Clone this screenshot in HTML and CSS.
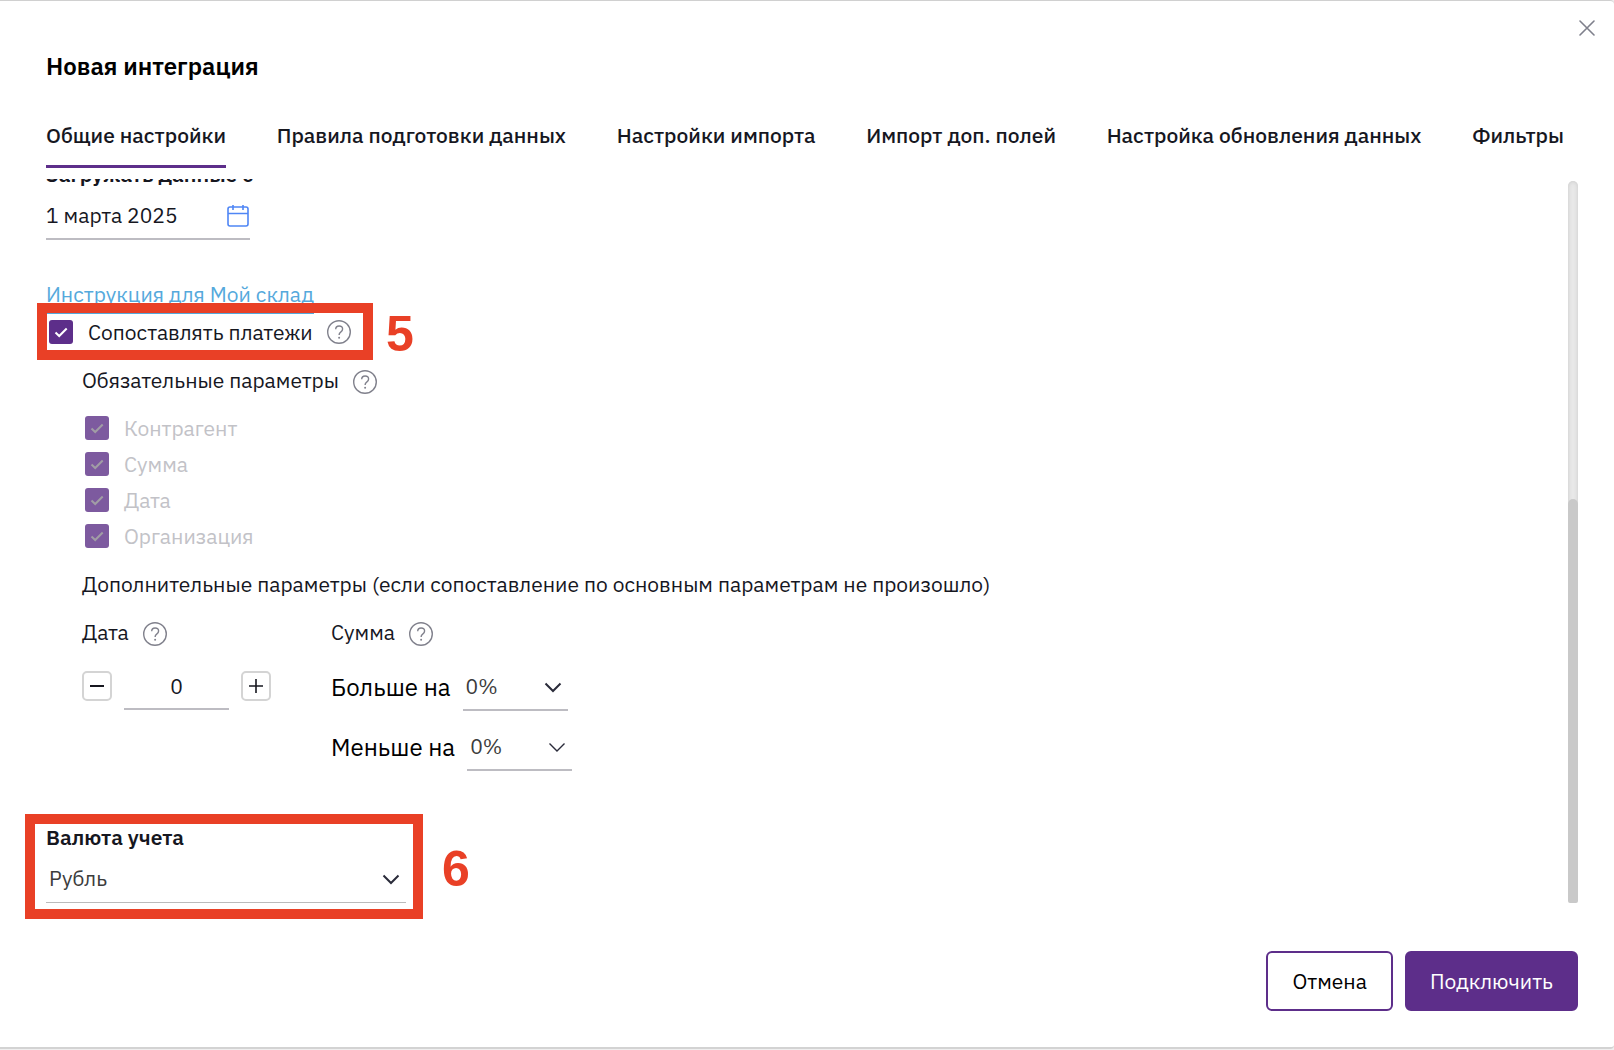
FILE: index.html
```
<!DOCTYPE html>
<html lang="ru">
<head>
  <meta charset="UTF-8">
  <meta name="viewport" content="width=device-width, initial-scale=1.0">
  <title>Новая интеграция</title>
  <link rel="stylesheet" href="styles.css">
</head>
<body>

  <!-- shared icons -->
  <svg class="sprite" aria-hidden="true">
    <symbol id="help" viewBox="0 0 24 24">
      <circle cx="12" cy="12" r="11.3"/>
      <path d="M8.7 9.2C8.7 7.2 10.1 6 12.1 6s3.5 1.3 3.5 3.1c0 1.5-.8 2.3-1.9 3-1.2.8-1.6 1.5-1.6 2.9"/>
      <circle class="dot" cx="12.1" cy="17.8" r="1"/>
    </symbol>
    <symbol id="check" viewBox="0 0 24 24">
      <path d="M6.5 12.5l3.7 3.5 7.5-7.5"/>
    </symbol>
    <symbol id="chevron" viewBox="0 0 18 12">
      <path d="M1.500 2.500l7.500 7.500 7.500-7.500"/>
    </symbol>
  </svg>

  <div class="dialog" role="dialog" aria-labelledby="title">
    <button class="close" type="button" aria-label="Закрыть">
      <svg viewBox="0 0 16 16"><path d="M1 1l14 14M15 1L1 15"/></svg>
    </button>

    <h1 class="title" id="title">Новая интеграция</h1>

    <nav class="tabs">
      <a class="tab active" href="#general">Общие настройки</a>
      <a class="tab" href="#rules">Правила подготовки данных</a>
      <a class="tab" href="#import">Настройки импорта</a>
      <a class="tab" href="#fields">Импорт доп. полей</a>
      <a class="tab" href="#update">Настройка обновления данных</a>
      <a class="tab" href="#filters">Фильтры</a>
    </nav>

    <div class="body">
      <form class="content" id="integration">
        <label class="label" for="date">Загружать данные с</label>
        <div class="date">
          <input type="text" id="date" value="1 марта 2025">
          <svg class="calendar" viewBox="0 0 22 24">
            <rect x="1" y="3" width="20" height="19" rx="2"/>
            <path d="M1 9.5h20M6 1v5M16 1v5"/>
          </svg>
        </div>

        <a class="link" href="#manual">Инструкция для Мой склад</a>

        <div class="row">
          <span class="check">
            <input type="checkbox" id="match" checked>
            <svg><use href="#check"/></svg>
          </span>
          <label for="match">Сопоставлять платежи</label>
          <svg class="help"><use href="#help"/></svg>
        </div>

        <div class="group">
          <div class="row">
            <span>Обязательные параметры</span>
            <svg class="help"><use href="#help"/></svg>
          </div>

          <div class="checks">
            <div class="row disabled">
              <span class="check"><input type="checkbox" id="agent" checked disabled><svg><use href="#check"/></svg></span>
              <label for="agent">Контрагент</label>
            </div>
            <div class="row disabled">
              <span class="check"><input type="checkbox" id="sum" checked disabled><svg><use href="#check"/></svg></span>
              <label for="sum">Сумма</label>
            </div>
            <div class="row disabled">
              <span class="check"><input type="checkbox" id="day" checked disabled><svg><use href="#check"/></svg></span>
              <label for="day">Дата</label>
            </div>
            <div class="row disabled">
              <span class="check"><input type="checkbox" id="org" checked disabled><svg><use href="#check"/></svg></span>
              <label for="org">Организация</label>
            </div>
          </div>

          <p class="note">Дополнительные параметры (если сопоставление по основным параметрам не произошло)</p>

          <div class="extra">
            <div class="column">
              <div class="row">
                <label for="days">Дата</label>
                <svg class="help"><use href="#help"/></svg>
              </div>
              <div class="stepper">
                <button type="button" aria-label="Меньше"><svg viewBox="0 0 16 16"><path class="bold" d="M1 8h14"/></svg></button>
                <input type="text" id="days" value="0">
                <button type="button" aria-label="Больше"><svg viewBox="0 0 16 16"><path d="M1 8h14M8 1v14"/></svg></button>
              </div>
            </div>

            <div class="column">
              <div class="row">
                <span>Сумма</span>
                <svg class="help"><use href="#help"/></svg>
              </div>
              <div class="percents">
                <div class="percent">
                  <label for="more">Больше на</label>
                  <span class="select">
                    <select id="more"><option>0%</option></select>
                    <svg><use href="#chevron"/></svg>
                  </span>
                </div>
                <div class="percent">
                  <label for="less">Меньше на</label>
                  <span class="select thin">
                    <select id="less"><option>0%</option></select>
                    <svg><use href="#chevron"/></svg>
                  </span>
                </div>
              </div>
            </div>
          </div>
        </div>

        <label class="label currency-label" for="currency">Валюта учета</label>
        <span class="select currency">
          <select id="currency"><option>Рубль</option></select>
          <svg><use href="#chevron"/></svg>
        </span>
      </form>

      <div class="scrollbar"><div class="thumb"></div></div>
    </div>

    <footer class="footer">
      <button class="btn" type="button">Отмена</button>
      <button class="btn primary" type="submit" form="integration">Подключить</button>
    </footer>

    <!-- step marks over the form -->
    <div class="mark mark-5"></div>
    <div class="number number-5">5</div>
    <div class="mark mark-6"></div>
    <div class="number number-6">6</div>
  </div>

</body>
</html>
```
FILE: styles.css
```
* {
  box-sizing: border-box;
}

body {
  margin: 0;
  background: #efefef;
  font-family: "IBM Plex Sans", Roboto, sans-serif;
  font-size: 21px;
  line-height: 28px;
  color: #16171f;
}

input, select, button {
  font: inherit;
  color: inherit;
  margin: 0;
  padding: 0;
  border: 0;
  border-radius: 0;
  background: none;
  appearance: none;
}

svg {
  display: block;
  fill: none;
  stroke: currentColor;
}

.sprite {
  position: absolute;
  width: 0;
  height: 0;
}

.dialog {
  position: relative;
  display: flex;
  flex-direction: column;
  height: calc(100vh - 1px);
  min-height: 900px;
  padding: 49px 36px 36px 46px;
  background: #fff;
  border-top: 1px solid #d0d0d0;
  border-bottom: 2px solid #d3d3d3;
  border-radius: 0 4px 4px 0;
}

.close {
  position: absolute;
  top: 19px;
  right: 19px;
  width: 16px;
  height: 16px;
  color: #7f808c;
}

.close svg {
  width: 16px;
  height: 16px;
  stroke-width: 1.6;
  stroke-linecap: round;
}

.title {
  margin: 0 0 39px;
  font-size: 24px;
  line-height: 32px;
  font-weight: 600;
  color: #000;
}

/* tabs */
.tabs {
  display: flex;
  justify-content: space-between;
  padding-right: 14px;
}

.tab {
  padding-bottom: 16px;
  border-bottom: 3px solid transparent;
  font-weight: 500;
  color: inherit;
  text-decoration: none;
  white-space: nowrap;
}

.tab.active {
  border-color: #5d2e8a;
}

/* scrolled to the end, so the top of the form is cut */
.body {
  flex: 1;
  display: flex;
  justify-content: space-between;
  align-items: flex-end;
  min-height: 0;
  margin: 11px 0 48px;
  overflow: hidden;
}

.content {
  display: flex;
  flex-direction: column;
  align-items: flex-start;
}

.scrollbar {
  display: flex;
  align-items: flex-end;
  width: 10px;
  height: calc(100% - 2px);
  border-radius: 5px;
  background: #e8e8e8;
  box-shadow: inset 0 0 4px #c8c8c8;
}

.thumb {
  width: 100%;
  height: 56%;
  border-radius: 5px 5px 2px 2px;
  background: #c9c9c9;
}

.label {
  font-weight: 600;
}

.date {
  display: flex;
  align-items: center;
  width: 204px;
  height: 46px;
  margin-top: 6px;
  padding-right: 1px;
  border-bottom: 2px solid #bdbcc2;
}

.date input {
  flex: 1;
  min-width: 0;
  padding-bottom: 2px;
}

.calendar {
  width: 22px;
  height: 24px;
  color: #4f86f5;
  stroke-width: 1.6;
}

.link {
  margin: 40px 0 4px;
  padding-bottom: 5px;
  border-bottom: 1px solid #55a9dc;
  color: #55a9dc;
  text-decoration: none;
}

.row {
  display: flex;
  align-items: center;
  height: 28px;
}

.help {
  width: 24px;
  height: 24px;
  margin-left: 14px;
  color: #80818c;
  stroke-width: 1.4;
}

.group .help {
  margin-top: 3px;
}

.dot {
  fill: currentColor;
  stroke: none;
}

.check {
  display: grid;
  margin: 0 15px 0 3px;
  color: #fff;
}

.check input,
.check svg {
  grid-area: 1 / 1;
  width: 24px;
  height: 24px;
}

.check input {
  border-radius: 3px;
  background: #5d2e8a;
}

.check svg {
  stroke-width: 2;
  pointer-events: none;
}

.disabled {
  color: #c2c2c7;
}

.disabled .check {
  color: #a19da5;
}

.disabled input {
  background: #7d5a9f;
}

.group {
  display: flex;
  flex-direction: column;
  gap: 20px;
  padding: 20px 0 0 36px;
}

.checks {
  display: flex;
  flex-direction: column;
  gap: 8px;
}

.note {
  margin: 0;
}

.extra {
  display: flex;
  gap: 60px;
}

.column {
  display: flex;
  flex-direction: column;
  gap: 20px;
}

.stepper {
  display: flex;
  align-items: flex-start;
  gap: 12px;
}

.stepper button {
  display: flex;
  align-items: center;
  justify-content: center;
  width: 30px;
  height: 30px;
  margin-top: 5px;
  border: 2px solid #d4d4d4;
  border-radius: 5px;
}

.stepper svg {
  width: 16px;
  height: 16px;
  stroke-width: 1.6;
}

.stepper .bold {
  stroke-width: 2;
}

.stepper input {
  width: 105px;
  height: 44px;
  padding-bottom: 3px;
  border-bottom: 2px solid #bdbcc2;
  text-align: center;
}

.percents {
  display: flex;
  flex-direction: column;
  gap: 15px;
}

.percent {
  display: flex;
  align-items: center;
  gap: 12px;
  font-size: 24px;
  color: #000;
}

.percent label {
  padding-bottom: 4px;
}

.select {
  display: grid;
  align-items: center;
  width: 105px;
  height: 45px;
  border-bottom: 2px solid #bdbcc2;
  font-size: 21px;
  color: #2a2b3a;
}

.select select,
.select svg {
  grid-area: 1 / 1;
}

.select select {
  width: 100%;
  padding: 0 3px 4px;
  color: #3c3c3c;
}

.select svg {
  justify-self: end;
  width: 18px;
  height: 12px;
  margin: 0 6px 2px 0;
  stroke-width: 2;
  pointer-events: none;
}

.thin svg {
  stroke-width: 1.4;
}

.currency-label {
  margin-top: 52px;
}

.currency {
  width: 360px;
  height: 52px;
  padding-top: 7px;
  border-bottom: 1px solid #bbb;
}

/* buttons */
.footer {
  display: flex;
  justify-content: flex-end;
  gap: 12px;
}

.btn {
  height: 60px;
  padding: 0 24px;
  border: 2px solid #5d2e8a;
  border-radius: 6px;
  color: #000;
}

.btn.primary {
  padding: 0 23px;
  background: #5d2e8a;
  color: #fff;
}

/* step marks */
.mark {
  position: absolute;
  border: 10px solid #e94026;
  pointer-events: none;
}

.mark-5 {
  left: 37px;
  bottom: 687px;
  width: 336px;
  height: 57px;
}

.mark-6 {
  left: 25px;
  bottom: 128px;
  width: 398px;
  height: 105px;
}

.number {
  position: absolute;
  font-family: "Liberation Sans", Arial, sans-serif;
  font-size: 50px;
  line-height: 56px;
  font-weight: 700;
  color: #e94026;
}

.number-5 {
  left: 386px;
  bottom: 685px;
}

.number-6 {
  left: 442px;
  bottom: 150px;
}
```
